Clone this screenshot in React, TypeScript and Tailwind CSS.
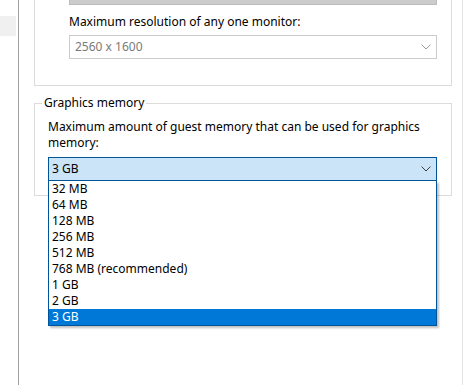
import React from "react";

const sizes = ["32 MB", "64 MB", "128 MB", "256 MB", "512 MB", "768 MB (recommended)", "1 GB", "2 GB", "3 GB"];

function Chevron({ color }: { color: string }) {
  return (
    <svg width="10" height="6" viewBox="0 0 10 6" className="shrink-0">
      <path d="M0.5 0.5 L5 5 L9.5 0.5" fill="none" stroke={color} strokeWidth="1" />
    </svg>
  );
}

export default function App() {
  return (
    <div
      className="w-[466px] h-[385px] bg-white flex overflow-hidden text-[12px] text-black"
      style={{ fontFamily: '"Noto Sans", "Open Sans", sans-serif' }}
    >
      {/* side list */}
      <div className="w-[19px] shrink-0 border-r border-[#a0a0a0] pt-[16px]">
        <div className="w-[16px] h-[20px] bg-[#f0f0f0]" />
      </div>

      <div className="w-[443px] shrink-0 pl-[15px] pr-[10px] flex flex-col">
        {/* display group (top cut off) */}
        <div className="h-[86px] border-x border-b border-[#dcdcdc] pl-[34px] pr-[14px]">
          <div className="h-[5px] bg-[#cccccc] border border-t-0 border-[#bcbcbc]" />
          <div className="mt-[9px] leading-[16px]">Maximum resolution of any one monitor:</div>
          <div className="mt-[5px] h-[24px] border border-[#cccccc] flex items-center justify-between pl-[5px] pr-[5px] text-[#7a7a7a]">
            <span>2560 x 1600</span>
            <Chevron color="#9a9a9a" />
          </div>
        </div>

        {/* graphics memory group */}
        <div className="relative mt-[17px] h-[93px] border border-[#dcdcdc] pl-[13px] pr-[14px] pt-[15px]">
          <div className="absolute left-[7px] top-[-9px] bg-white px-[2px] leading-[16px]">Graphics memory</div>
          <div className="leading-[16px]">
            Maximum amount of guest memory that can be used for graphics memory:
          </div>
          <div className="relative mt-[6px]">
            <div className="h-[24px] bg-[#cce4f7] border border-[#005499] flex items-center justify-between pl-[3px] pr-[5px]">
              <span>3 GB</span>
              <Chevron color="#404040" />
            </div>
            <div className="absolute left-0 right-0 top-[24px] z-10 bg-white border border-t-0 border-[#005499] shadow-[2px_2px_2px_rgba(0,0,0,0.25)]">
              {sizes.map((s) => (
                <div
                  key={s}
                  className={
                    s === "3 GB"
                      ? "h-[16px] leading-[16px] pl-[3px] bg-[#0078d7] text-white"
                      : "h-[16px] leading-[16px] pl-[3px]"
                  }
                >
                  {s}
                </div>
              ))}
            </div>
          </div>
        </div>
      </div>

      <div className="w-[4px] shrink-0 border-l border-[#e3e3e3]" />
    </div>
  );
}
